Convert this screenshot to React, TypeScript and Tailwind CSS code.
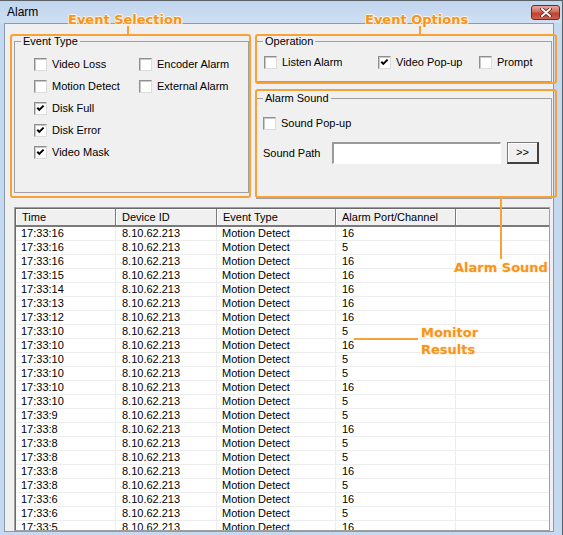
import React from "react";

function Check({ checked }: { checked?: boolean }) {
  return (
    <span className="relative inline-block w-[13px] h-[13px] shrink-0 bg-white border border-[#8f8f8f] border-r-[#dcdcdc] border-b-[#dcdcdc] shadow-[inset_1px_1px_0_#c8c8c8]">
      {checked && (
        <svg className="absolute left-0 top-0" width="11" height="11" viewBox="0 0 11 11">
          <path d="M2.3 4.8 L4.3 6.9 L8.6 2.6" stroke="#000" strokeWidth="2" fill="none" />
        </svg>
      )}
    </span>
  );
}

function CB({ label, checked, className }: { label: string; checked?: boolean; className?: string }) {
  return (
    <div className={"flex items-center h-[22px] " + (className ?? "")}>
      <Check checked={checked} />
      <span className="ml-[5px] leading-[13px] whitespace-nowrap">{label}</span>
    </div>
  );
}

const rows: [string, string][] = [
  ["17:33:16", "16"],
  ["17:33:16", "5"],
  ["17:33:16", "16"],
  ["17:33:15", "16"],
  ["17:33:14", "16"],
  ["17:33:13", "16"],
  ["17:33:12", "16"],
  ["17:33:10", "5"],
  ["17:33:10", "16"],
  ["17:33:10", "5"],
  ["17:33:10", "5"],
  ["17:33:10", "16"],
  ["17:33:10", "5"],
  ["17:33:9", "5"],
  ["17:33:8", "16"],
  ["17:33:8", "5"],
  ["17:33:8", "5"],
  ["17:33:8", "16"],
  ["17:33:8", "5"],
  ["17:33:6", "16"],
  ["17:33:6", "5"],
  ["17:33:5", "16"],
];

const ann =
  "absolute font-['DejaVu_Sans',Verdana,sans-serif] font-bold text-[13px] leading-[17px] text-[#f7941d] whitespace-nowrap [text-shadow:-1px_0_#fff3e0,1px_0_#fff3e0,0_-1px_#fff3e0,0_1px_#fff3e0]";

export default function App() {
  return (
    <div className="relative w-[563px] h-[535px] overflow-hidden flex flex-col bg-[#c5d9f1] border-t border-r border-[#5a5f66] font-['Liberation_Sans',Arial,sans-serif] text-[11px] text-black">
      {/* Title bar */}
      <div className="h-[22px] shrink-0 flex items-center pl-[7px] bg-[linear-gradient(#c0d5ee,#cfe0f4)]">
        <span className="text-[12px] leading-[14px]">Alarm</span>
        <div className="ml-auto mr-[2px] w-[29px] h-[15px] rounded-[3px] border border-[#6e2a22] bg-[linear-gradient(#e8a89c,#d26a5c_45%,#c0412f_55%,#d06050)] flex items-center justify-center">
          <svg width="12" height="9" viewBox="0 0 12 9">
            <path d="M2 1 L10 8 M10 1 L2 8" stroke="#5b1d14" strokeWidth="3.6" strokeLinecap="round" />
            <path d="M2 1 L10 8 M10 1 L2 8" stroke="#fff" strokeWidth="2" strokeLinecap="round" />
          </svg>
        </div>
      </div>

      {/* Client area */}
      <div className="flex-1 ml-[4px] mr-[8px] mb-[3px] border border-[#8a9bb1] bg-[#f0f0f0] flex flex-col overflow-hidden">
        {/* Top row */}
        <div className="flex items-start pt-[11px] shrink-0">
          <fieldset className="ml-[9px] w-[235px] h-[158px] border border-[#a0a0a0] pl-[6px]">
            <legend className="px-[2px] leading-[13px]">Event Type</legend>
            <div className="ml-[13px] pt-[5px] grid grid-cols-[105px_1fr]">
              <CB label="Video Loss" />
              <CB label="Encoder Alarm" />
              <CB label="Motion Detect" />
              <CB label="External Alarm" />
              <CB label="Disk Full" checked className="col-span-2" />
              <CB label="Disk Error" checked className="col-span-2" />
              <CB label="Video Mask" checked className="col-span-2" />
            </div>
          </fieldset>

          <div className="ml-[7px] w-[296px] flex flex-col">
            <fieldset className="h-[47px] border border-[#a0a0a0] pl-[6px]">
              <legend className="px-[2px] leading-[13px]">Operation</legend>
              <div className="flex pt-[3px] ml-[1px]">
                <CB label="Listen Alarm" className="w-[114px]" />
                <CB label="Video Pop-up" checked className="w-[101px]" />
                <CB label="Prompt" />
              </div>
            </fieldset>

            <fieldset className="mt-[10px] h-[107px] border border-[#a0a0a0] pl-[6px]">
              <legend className="px-[2px] leading-[13px]">Alarm Sound</legend>
              <div className="pt-[7px]">
                <CB label="Sound Pop-up" />
                <div className="flex items-center mt-[8px] h-[22px]">
                  <span className="w-[69px] leading-[13px]">Sound Path</span>
                  <div className="w-[169px] h-[22px] bg-white border-t-2 border-l-2 border-r border-b border-t-[#9a9a9a] border-l-[#9a9a9a] border-r-white border-b-white" />
                  <div className="ml-[6px] w-[32px] h-[22px] flex items-center justify-center bg-[#f0f0f0] border border-[#7a7a7a] border-r-2 border-b-2 border-r-[#404040] border-b-[#404040] shadow-[inset_1px_1px_0_#fff] leading-[13px]">
                    &gt;&gt;
                  </div>
                </div>
              </div>
            </fieldset>
          </div>
        </div>

        {/* List view */}
        <div className="ml-[9px] mt-[8px] w-[536px] flex-1 border border-[#a0a0a0] bg-white overflow-hidden">
          <div className="h-full border-t border-l border-[#696969]">
            <div className="flex h-[18px] bg-[#f0f0f0] border-b-2 border-[#7a7a7a]">
              <div className="w-[100px] shrink-0 pl-[6px] flex items-center border-r border-[#7a7a7a] shadow-[inset_1px_1px_0_#fff] leading-[13px]">Time</div>
              <div className="w-[101px] shrink-0 pl-[6px] flex items-center border-r border-[#7a7a7a] shadow-[inset_1px_1px_0_#fff] leading-[13px]">Device ID</div>
              <div className="w-[119px] shrink-0 pl-[6px] flex items-center border-r border-[#7a7a7a] shadow-[inset_1px_1px_0_#fff] leading-[13px]">Event Type</div>
              <div className="w-[120px] shrink-0 pl-[6px] flex items-center border-r border-[#7a7a7a] shadow-[inset_1px_1px_0_#fff] leading-[13px]">Alarm Port/Channel</div>
              <div className="flex-1 shadow-[inset_1px_1px_0_#fff]" />
            </div>
            {rows.map(([t, p], i) => (
              <div key={i} className="flex h-[14px] border-b border-[#ededed]">
                <div className="w-[100px] shrink-0 pl-[5px] flex items-center border-r border-[#ededed] leading-[13px]">{t}</div>
                <div className="w-[101px] shrink-0 pl-[6px] flex items-center border-r border-[#ededed] leading-[13px]">8.10.62.213</div>
                <div className="w-[119px] shrink-0 pl-[5px] flex items-center border-r border-[#ededed] leading-[13px]">Motion Detect</div>
                <div className="w-[120px] shrink-0 pl-[6px] flex items-center border-r border-[#ededed] leading-[13px]">{p}</div>
                <div className="flex-1" />
              </div>
            ))}
          </div>
        </div>
      </div>

      {/* Annotations (overlay) */}
      <div className="absolute left-[10px] top-[33px] w-[241px] h-[164px] border-2 border-[#f7a136] rounded-[3px]" />
      <div className="absolute left-[255px] top-[33px] w-[302px] h-[50px] border-2 border-[#f7a136] rounded-[3px]" />
      <div className="absolute left-[255px] top-[88px] w-[302px] h-[109px] border-2 border-[#f7a136] rounded-[3px]" />
      <div className="absolute left-[127px] top-[25px] w-[2px] h-[9px] bg-[#f7a136]" />
      <div className="absolute left-[419px] top-[25px] w-[2px] h-[9px] bg-[#f7a136]" />
      <div className="absolute left-[500px] top-[196px] w-[2px] h-[62px] bg-[#f7a136]" />
      <div className="absolute left-[354px] top-[337px] w-[64px] h-[2px] bg-[#f7a136]" />

      <div className={ann + " left-[68px] top-[10px]"}>Event Selection</div>
      <div className={ann + " left-[365px] top-[10px]"}>Event Options</div>
      <div className={ann + " left-[454px] top-[258px]"}>Alarm Sound</div>
      <div className={ann + " left-[421px] top-[323px]"}>
        Monitor
        <br />
        Results
      </div>
    </div>
  );
}
